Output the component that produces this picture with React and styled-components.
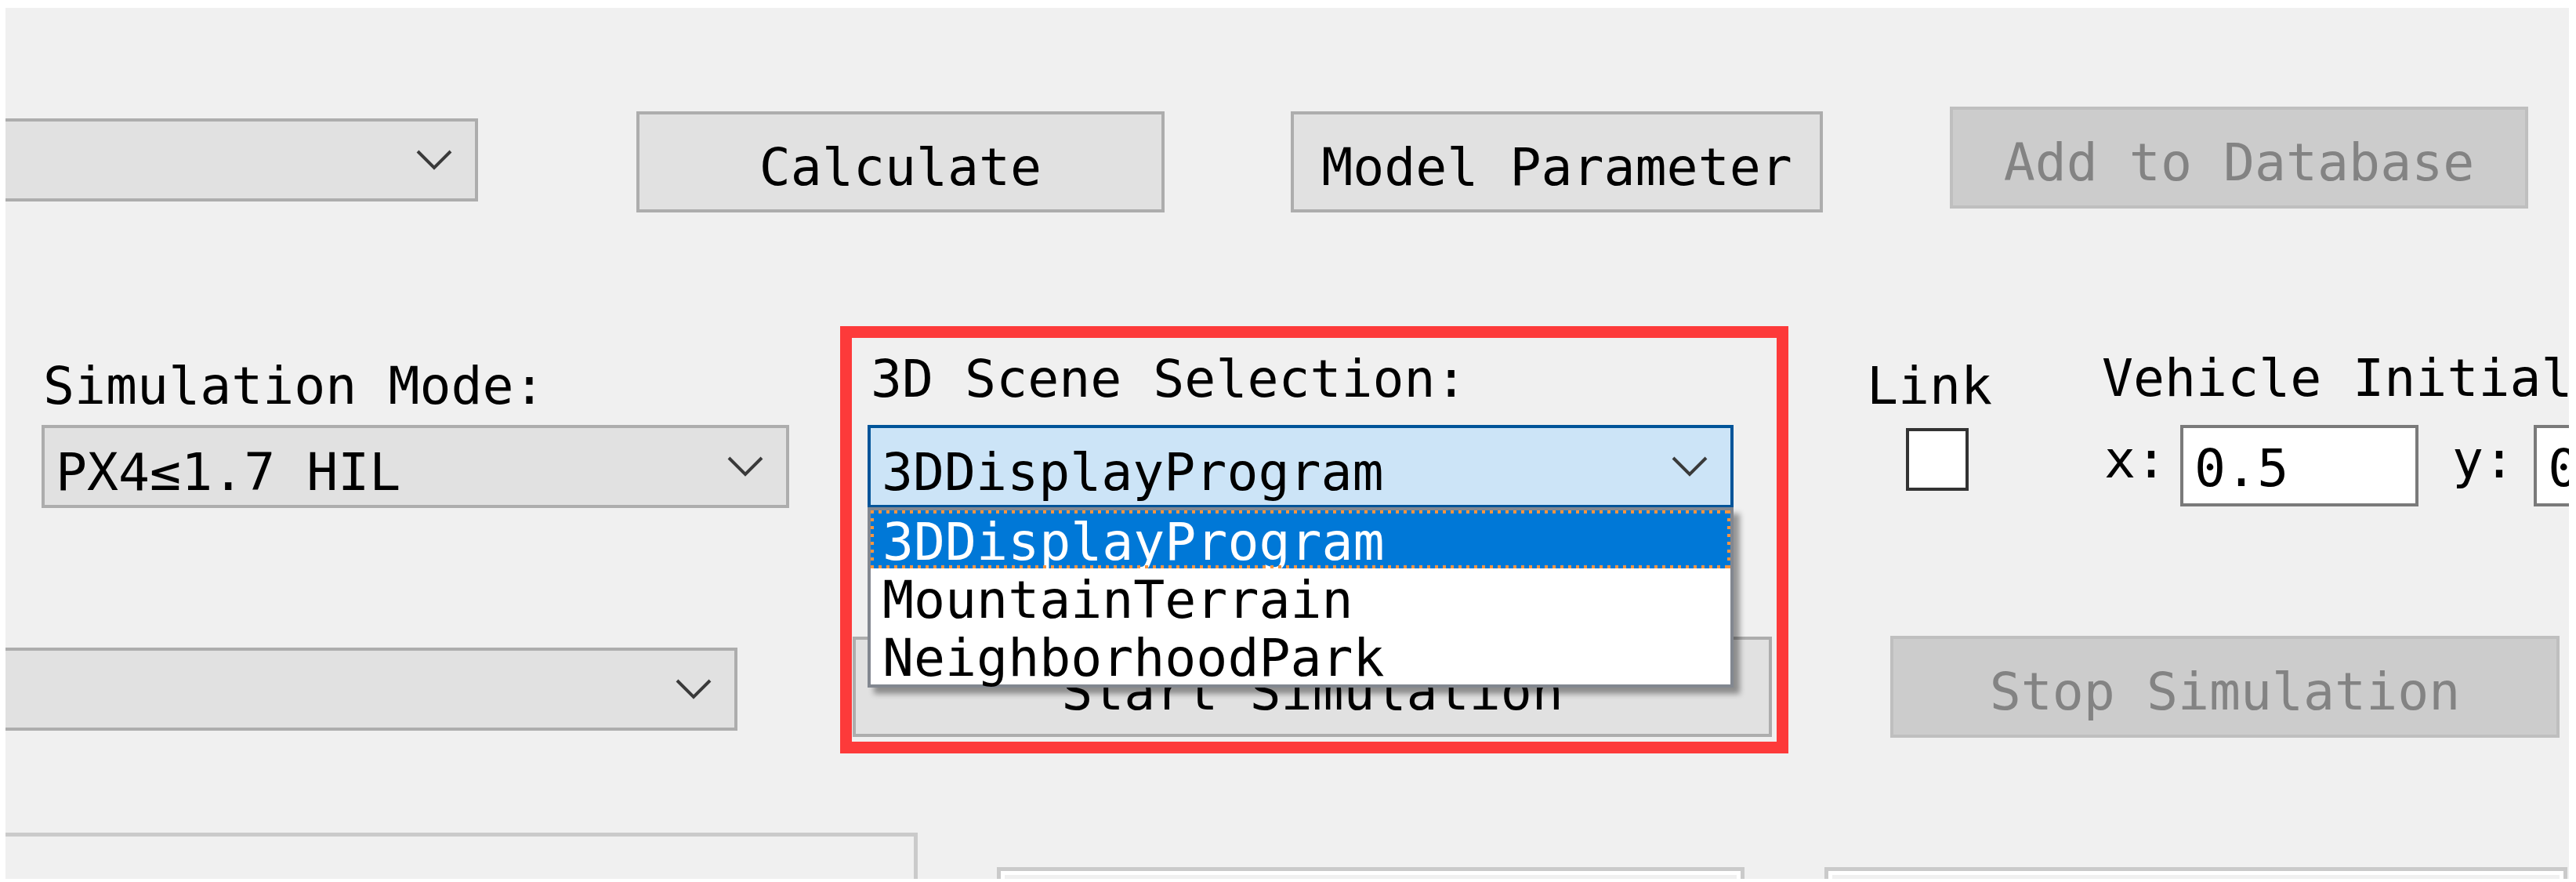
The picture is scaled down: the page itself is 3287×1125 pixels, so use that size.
import React from "react";
import styled, { createGlobalStyle } from "styled-components";

const GlobalStyle = createGlobalStyle`
  html, body {
    margin: 0;
    padding: 0;
    background: #ffffff;
  }
`;

const Panel = styled.div`
  margin: 10px 9px 4px 7px;
  height: 1111px;
  background: #f0f0f0;
  overflow: hidden;
  display: flex;
  flex-direction: column;
  font-family: "DejaVu Sans Mono", "Liberation Mono", "Noto Sans CJK SC", monospace;
  font-size: 66.5px;
  line-height: 51px;
  color: #000;
`;

const Row = styled.div`
  display: flex;
  align-items: flex-start;
  flex-shrink: 0;
  height: ${(p) => p.$h}px;
  margin-top: ${(p) => p.$top || 0}px;
`;

const Column = styled.div`
  display: flex;
  flex-direction: column;
  align-items: flex-start;
  flex-shrink: 0;
  width: ${(p) => (p.$w ? `${p.$w}px` : "auto")};
  margin-left: ${(p) => p.$ml || 0}px;
  margin-top: ${(p) => p.$mt || 0}px;
`;

const Label = styled.div`
  flex-shrink: 0;
  white-space: pre;
  height: 51px;
  margin-left: ${(p) => p.$ml || 0}px;
  margin-top: ${(p) => p.$mt || 0}px;
`;

const Button = styled.div`
  flex-shrink: 0;
  box-sizing: border-box;
  display: flex;
  align-items: center;
  justify-content: center;
  padding-top: 13px;
  width: ${(p) => p.$w}px;
  height: ${(p) => p.$h}px;
  margin-left: ${(p) => p.$ml || 0}px;
  margin-top: ${(p) => p.$mt || 0}px;
  background: ${(p) => (p.$disabled ? "#cccccc" : "#e1e1e1")};
  border: 4px solid ${(p) => (p.$disabled ? "#bfbfbf" : "#adadad")};
  color: ${(p) => (p.$disabled ? "#838383" : "#000")};
  white-space: pre;
`;

const ComboBox = styled.div`
  position: relative;
  flex-shrink: 0;
  box-sizing: border-box;
  display: flex;
  align-items: center;
  justify-content: space-between;
  width: ${(p) => p.$w}px;
  height: 106px;
  margin-left: ${(p) => p.$ml || 0}px;
  margin-top: ${(p) => p.$mt || 0}px;
  padding: 0 29px 0 14px;
  background: ${(p) => (p.$focused ? "#cce4f7" : "#e1e1e1")};
  border: 4px solid ${(p) => (p.$focused ? "#005499" : "#adadad")};
`;

const ComboText = styled.span`
  margin-top: 14px;
  white-space: pre;
`;

const Chevron = () => (
  <svg width="46" height="26" viewBox="0 0 46 26">
    <polyline
      points="2,2 23,23 44,2"
      fill="none"
      stroke="#3a3a3a"
      strokeWidth="4"
      strokeLinejoin="miter"
    />
  </svg>
);

const DropList = styled.div`
  position: absolute;
  z-index: 3;
  top: 101px;
  left: -4px;
  box-sizing: border-box;
  width: 1105px;
  height: 230px;
  background: #ffffff;
  border: 4px solid #828790;
  box-shadow: 8px 8px 7px rgba(0, 0, 0, 0.38);
  display: flex;
  flex-direction: column;
`;

const DropItem = styled.div`
  position: relative;
  height: 74px;
  flex-shrink: 0;
  box-sizing: border-box;
  padding: 15px 0 0 15px;
  white-space: pre;
  background: ${(p) => (p.$selected ? "#0078d7" : "transparent")};
  color: ${(p) => (p.$selected ? "#ffffff" : "#000000")};

  &::before {
    content: "";
    display: ${(p) => (p.$selected ? "block" : "none")};
    position: absolute;
    inset: 0;
    background:
      repeating-linear-gradient(90deg, #f7953f 0 4px, transparent 4px 10px) top left / 100% 4px no-repeat,
      repeating-linear-gradient(90deg, #f7953f 0 4px, transparent 4px 10px) bottom left / 100% 4px no-repeat,
      repeating-linear-gradient(180deg, #f7953f 0 4px, transparent 4px 10px) top left / 4px 100% no-repeat,
      repeating-linear-gradient(180deg, #f7953f 0 4px, transparent 4px 10px) top right / 4px 100% no-repeat;
  }
`;

const Highlight = styled.div`
  flex-shrink: 0;
  box-sizing: border-box;
  width: 1210px;
  height: 545px;
  margin-left: 65px;
  padding-top: 27px;
  border: 15px solid #fd3a3a;
  display: flex;
  flex-direction: column;
  align-items: flex-start;
`;

const CheckBox = styled.div`
  flex-shrink: 0;
  box-sizing: border-box;
  width: 80px;
  height: 80px;
  margin-left: ${(p) => p.$ml || 0}px;
  margin-top: ${(p) => p.$mt || 0}px;
  background: #ffffff;
  border: 4px solid #333333;
`;

const InputRow = styled.div`
  display: flex;
  align-items: flex-start;
  height: 104px;
  margin-top: ${(p) => p.$mt || 0}px;
`;

const TextInput = styled.div`
  flex-shrink: 0;
  box-sizing: border-box;
  display: flex;
  align-items: center;
  width: ${(p) => p.$w}px;
  height: 104px;
  margin-left: ${(p) => p.$ml || 0}px;
  padding: 6px 0 0 14px;
  background: #ffffff;
  border: 4px solid #7a7a7a;
  white-space: pre;
`;

const GroupFrame = styled.div`
  flex-shrink: 0;
  box-sizing: border-box;
  width: ${(p) => p.$w}px;
  height: 200px;
  margin-left: ${(p) => p.$ml || 0}px;
  margin-top: ${(p) => p.$mt || 0}px;
  border: 5px solid #cacaca;
  box-shadow: ${(p) => (p.$etched ? "inset 0 0 0 5px #ffffff" : "none")};
`;

export default function App() {
  return (
    <>
      <GlobalStyle />
      <Panel>
        <Row $h={261}>
          <ComboBox $w={623} $ml={-20} $mt={141}>
            <ComboText />
            <Chevron />
          </ComboBox>
          <Button $w={674} $h={129} $ml={202} $mt={132}>Calculate</Button>
          <Button $w={679} $h={129} $ml={161} $mt={132}>Model Parameter</Button>
          <Button $w={738} $h={130} $ml={162} $mt={126} $disabled>
            Add to Database
          </Button>
        </Row>

        <Row $h={545} $top={145}>
          <Column $w={1000}>
            <Label $ml={48} $mt={51}>Simulation Mode:</Label>
            <ComboBox $w={954} $ml={46} $mt={24}>
              <ComboText>PX4≤1.7 HIL</ComboText>
              <Chevron />
            </ComboBox>
            <ComboBox $w={954} $ml={-20} $mt={178}>
              <ComboText />
              <Chevron />
            </ComboBox>
          </Column>

          <Highlight>
            <Label $ml={24}>3D Scene Selection:</Label>
            <ComboBox $w={1105} $ml={20} $mt={33} $focused>
              <ComboText>3DDisplayProgram</ComboText>
              <Chevron />
              <DropList>
                <DropItem $selected>3DDisplayProgram</DropItem>
                <DropItem>MountainTerrain</DropItem>
                <DropItem>NeighborhoodPark</DropItem>
              </DropList>
            </ComboBox>
            <Button $w={1173} $h={128} $ml={1} $mt={164}>Start Simulation</Button>
          </Highlight>

          <Column>
            <Row $h={230}>
              <Column $w={160} $ml={100} $mt={51}>
                <Label>Link</Label>
                <CheckBox $ml={50} $mt={28} />
              </Column>
              <Column $ml={140} $mt={41}>
                <Label>Vehicle Initial Position:</Label>
                <InputRow $mt={34}>
                  <Label $ml={3} $mt={19}>x:</Label>
                  <TextInput $w={304} $ml={17}>0.5</TextInput>
                  <Label $ml={43} $mt={19}>y:</Label>
                  <TextInput $w={304} $ml={24}>0.5</TextInput>
                </InputRow>
              </Column>
            </Row>
            <Button $w={854} $h={130} $ml={130} $mt={165} $disabled>
              Stop Simulation
            </Button>
          </Column>
        </Row>

        <Row $h={300} $top={101}>
          <GroupFrame $w={1184} $ml={-20} />
          <GroupFrame $w={954} $ml={101} $mt={44} $etched />
          <GroupFrame $w={948} $ml={102} $mt={44} $etched />
        </Row>
      </Panel>
    </>
  );
}
